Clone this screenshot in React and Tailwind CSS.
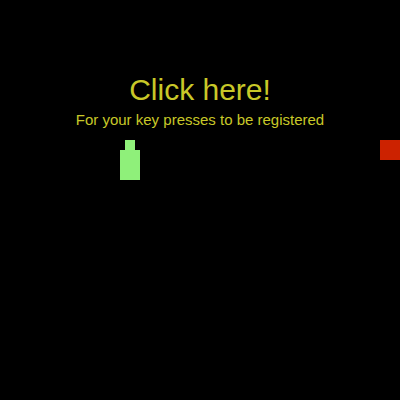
export default function App() {
  return (
    <div className="relative w-[400px] h-[400px] bg-black overflow-hidden" style={{ fontFamily: '"Liberation Sans", Arial, sans-serif' }}>
      <div className="flex flex-col items-center pt-[72px]">
        <div className="text-[30px] leading-[36px] text-[#c8c828]">Click here!</div>
        <div className="text-[15px] leading-[20px] mt-[2px] text-[#c8c828]">For your key presses to be registered</div>
      </div>
      <div className="absolute left-[125px] top-[140px] w-[10px] h-[10px] bg-[#8ff07a]" />
      <div className="absolute left-[120px] top-[150px] w-[20px] h-[30px] bg-[#8ff07a]" />
      <div className="absolute left-[380px] top-[140px] w-[20px] h-[20px] bg-[#cc2200]" />
    </div>
  );
}
